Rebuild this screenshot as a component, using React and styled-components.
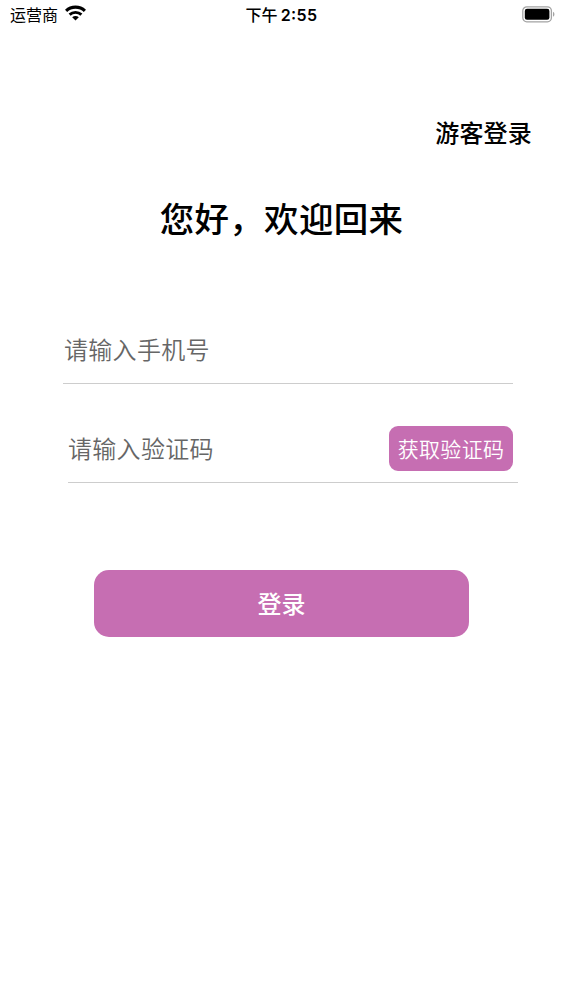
import React, { useState } from 'react';
import styled, { createGlobalStyle } from 'styled-components';

function StatusBar() {
    return (
        <StStatusBar>
            <StCarrier>
                <span>运营商</span>
                <svg width="21" height="16" viewBox="0 0 21 16" fill="none">
                    <path d="M1.1 5.9C6.3 0.9 14.7 0.9 19.9 5.9" stroke="#000" strokeWidth="3.1" />
                    <path d="M4.6 9.6C7.9 6.6 13.1 6.6 16.4 9.6" stroke="#000" strokeWidth="2.9" />
                    <path d="M10.5 15.6L7.2 12.3C9 10.7 12 10.7 13.8 12.3Z" fill="#000" />
                </svg>
            </StCarrier>
            <StTime>
                下午 <b>2:55</b>
            </StTime>
            <StBattery>
                <svg width="33" height="17" viewBox="0 0 33 17" fill="none">
                    <rect x="0.8" y="0.8" width="28.6" height="15" rx="4" stroke="#a3a3a3" strokeWidth="1.3" />
                    <rect x="2.8" y="2.8" width="24.6" height="11" rx="2.2" fill="#000" />
                    <path d="M31 5.8C32.9 6.6 32.9 10 31 10.8Z" fill="#a3a3a3" />
                </svg>
            </StBattery>
        </StStatusBar>
    );
}

function App() {
    const [phone, setPhone] = useState('');
    const [code, setCode] = useState('');

    return (
        <>
            <GlobalStyle />
            <StLayout>
                <StatusBar />
                <StGuestBtn>游客登录</StGuestBtn>
                <StTitle>您好，欢迎回来</StTitle>
                <StField $left={63}>
                    <StInput placeholder="请输入手机号" value={phone} onChange={(e) => setPhone(e.target.value)} />
                </StField>
                <StField $left={68} $code>
                    <StInput placeholder="请输入验证码" value={code} onChange={(e) => setCode(e.target.value)} />
                    <StCodeBtn>获取验证码</StCodeBtn>
                </StField>
                <StLoginBtn>登录</StLoginBtn>
            </StLayout>
        </>
    );
}

export default App;

const GlobalStyle = createGlobalStyle`
    * {
        box-sizing: border-box;
    }
    body {
        margin: 0;
        background-color: #fff;
    }
    body, input, button {
        font-family: Inter, "Noto Sans CJK SC", sans-serif;
    }
    button {
        border: none;
        padding: 0;
        cursor: pointer;
    }
`;

const StLayout = styled.div`
    width: 563px;
    height: 1000px;
    display: flex;
    flex-direction: column;
    color: #000;
    overflow: hidden;
`;

const StStatusBar = styled.div`
    height: 28px;
    display: grid;
    grid-template-columns: 1fr auto 1fr;
    align-items: center;
    padding: 0 8px 0 10px;
    font-size: 16px;
    line-height: 28px;
`;

const StCarrier = styled.div`
    display: flex;
    align-items: center;
    gap: 7px;

    span {
        padding-top: 1px;
    }

    svg {
        margin-top: -3px;
    }
`;

const StTime = styled.div`
    padding-right: 2px;
    font-weight: 500;
    word-spacing: -1px;

    b {
        font-weight: 600;
        letter-spacing: 0.4px;
        font-feature-settings: 'case';
    }
`;

const StBattery = styled.div`
    display: flex;
    justify-content: flex-end;
`;

const StGuestBtn = styled.button`
    align-self: flex-end;
    margin: 88px 31px 0 0;
    height: 36px;
    background: none;
    color: #000;
    font-size: 24px;
    font-weight: 500;
    line-height: 36px;
    letter-spacing: 0.2px;
`;

const StTitle = styled.h1`
    margin: 42px 0 0;
    height: 52px;
    font-size: 34.5px;
    font-weight: 500;
    line-height: 52px;
    text-align: center;
    letter-spacing: 0.3px;
`;

const StField = styled.div`
    display: flex;
    align-items: center;
    width: 450px;
    height: ${(props) => (props.$code ? '67px' : '70px')};
    margin: ${(props) => (props.$code ? '32px' : '68px')} 0 0 ${(props) => props.$left}px;
    padding: ${(props) => (props.$code ? '0 5px 1px 0' : '3px 0 0 1px')};
    border-bottom: 1px solid #cdcdcd;
`;

const StInput = styled.input`
    flex: 1;
    min-width: 0;
    height: 36px;
    border: none;
    outline: none;
    padding: 1px 0 0;
    background: none;
    color: #000;
    font-size: 24px;
    font-weight: 350;
    letter-spacing: 0.3px;

    &::placeholder {
        color: #666;
        opacity: 1;
    }
`;

const StCodeBtn = styled.button`
    width: 124px;
    height: 45px;
    padding-bottom: 2px;
    border-radius: 9px;
    background-color: #c66eb2;
    color: #fff;
    font-size: 21px;
    font-weight: 350;
    letter-spacing: 0.3px;
`;

const StLoginBtn = styled.button`
    align-self: center;
    width: 375px;
    height: 67px;
    margin-top: 87px;
    padding-bottom: 2px;
    border-radius: 15px;
    background-color: #c66eb2;
    color: #fff;
    font-size: 24px;
    font-weight: 500;
`;
